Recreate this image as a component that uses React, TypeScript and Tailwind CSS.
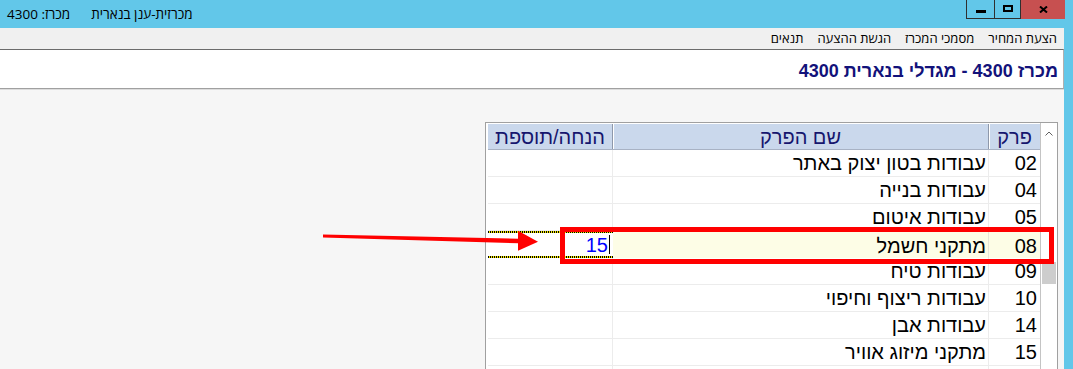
import React from "react";

type Row = { code: string; name: string; edit?: string };

const rows: Row[] = [
  { code: "02", name: "עבודות בטון יצוק באתר" },
  { code: "04", name: "עבודות בנייה" },
  { code: "05", name: "עבודות איטום" },
  { code: "08", name: "מתקני חשמל", edit: "15" },
  { code: "09", name: "עבודות טיח" },
  { code: "10", name: "עבודות ריצוף וחיפוי" },
  { code: "14", name: "עבודות אבן" },
  { code: "15", name: "מתקני מיזוג אוויר" },
  { code: "", name: "" },
];

function NormalRow({ r }: { r: Row }) {
  return (
    <div className="flex shrink-0 h-[27px] border-b border-[#ececec] bg-white">
      <div className="w-[125px] border-r border-[#ececec]" />
      <div
        dir="rtl"
        className="w-[376px] border-r border-[#ececec] flex items-center pr-[2px] text-[20px] text-black whitespace-nowrap"
      >
        {r.name}
      </div>
      <div className="w-[51px] flex items-center justify-end pr-[3px] text-[20px] text-black">
        {r.code}
      </div>
    </div>
  );
}

function EditRow({ r }: { r: Row }) {
  return (
    <div className="flex shrink-0 h-[27px]">
      <div className="w-[125px] flex flex-col bg-white">
        <div className="h-[2px] bg-[repeating-linear-gradient(90deg,#000_0px,#000_1px,#f2e600_1px,#f2e600_2px)]" />
        <div className="flex-1 flex items-center justify-end pr-[3px]">
          <span className="text-[20px] text-[#0000ff] leading-none">{r.edit}</span>
          <span className="w-px h-[19px] bg-black ml-px" />
        </div>
        <div className="h-[2px] bg-[repeating-linear-gradient(90deg,#000_0px,#000_1px,#f2e600_1px,#f2e600_2px)]" />
      </div>
      <div className="flex-1 flex flex-col bg-[#fdfde6]">
        <div className="h-px bg-[repeating-linear-gradient(90deg,#000_0px,#000_1px,#fdfde6_1px,#fdfde6_2px)]" />
        <div className="flex-1 flex">
          <div
            dir="rtl"
            className="w-[376px] border-r border-[#e6e6d8] flex items-center pr-[2px] text-[20px] text-black whitespace-nowrap"
          >
            {r.name}
          </div>
          <div className="flex-1 flex items-center justify-end pr-[3px] text-[20px] text-black">
            {r.code}
          </div>
        </div>
        <div className="h-px bg-[repeating-linear-gradient(90deg,#000_0px,#000_1px,#fdfde6_1px,#fdfde6_2px)]" />
      </div>
    </div>
  );
}

export default function App() {
  return (
    <div className="relative w-[1073px] h-[369px] overflow-hidden bg-[#62c7e9] font-['Liberation_Sans',Arial,sans-serif]">
      {/* Title bar */}
      <div className="flex h-[28px] items-start">
        <div
          dir="rtl"
          className="pl-[7px] pt-[5px] text-[13.5px] leading-[18px] text-black whitespace-nowrap font-['Open_Sans','Liberation_Sans',sans-serif]"
        >
          <span>מכרזית-ענן בנארית</span>
          <span className="mr-[21px]">מכרז: 4300</span>
        </div>
        <div className="ml-auto mr-[8px] flex h-[19px]">
          <div className="w-[28px] h-[19px] border-l border-b border-[#2f2f2f] flex justify-center pt-[10px]">
            <div className="w-[10px] h-[3px] bg-black" />
          </div>
          <div className="w-[26px] h-[19px] border-l border-b border-[#2f2f2f] flex justify-center pt-[5px]">
            <div className="w-[10px] h-[7px] border-2 border-black" />
          </div>
          <div className="w-[45px] h-[19px] border-l border-[#2f2f2f] bg-[#c75050] flex justify-center items-start pt-[6px]">
            <svg width="9" height="7" viewBox="0 0 9 7">
              <path d="M1 0.5 L8 6.5 M8 0.5 L1 6.5" stroke="#000" strokeWidth="2" />
            </svg>
          </div>
        </div>
      </div>

      {/* Body */}
      <div className="flex h-[341px]">
        <div className="w-[1064px] flex flex-col min-h-0">
          {/* Menu bar */}
          <div
            dir="rtl"
            className="shrink-0 h-[21px] bg-[#f0f0f0] flex items-center gap-[14px] pr-[7px] text-[13px] text-black font-['Open_Sans','Liberation_Sans',sans-serif]"
          >
            <span>הצעת המחיר</span>
            <span>מסמכי המכרז</span>
            <span>הגשת ההצעה</span>
            <span>תנאים</span>
          </div>
          {/* Title panel */}
          <div
            dir="rtl"
            className="shrink-0 h-[40px] bg-white border-t border-[#6b6b6b] border-b border-b-[#a0a0a0] border-r border-r-[#b0b0b0] flex items-center pr-[5px] pt-[4px] text-[18px] font-bold text-[#12127a] whitespace-nowrap"
          >
            מכרז 4300 - מגדלי בנארית 4300
          </div>
          <div className="shrink-0 h-px bg-[#dcdcdc]" />
          {/* Gray area */}
          <div className="flex-1 min-h-0 overflow-hidden bg-[#f6f6f6] flex justify-end items-start pt-[32px] pr-[6px]">
            <div className="shrink-0 w-[573px] h-[280px] border border-[#a0a0a0] bg-white flex">
              <div className="flex-1 pl-[2px] pt-px flex flex-col overflow-hidden">
                {/* Header */}
                <div className="flex shrink-0 h-[26px] bg-[#cad8ec] border-b border-[#a8b2c4] text-[20px] text-[#16166e]">
                  <div className="w-[125px] border-r border-[#8e98aa] flex items-center justify-center leading-none">
                    הנחה/תוספת
                  </div>
                  <div className="w-[376px] border-r border-[#8e98aa] shadow-[inset_1px_0_0_#ffffff] flex items-center justify-center leading-none">
                    שם הפרק
                  </div>
                  <div className="flex-1 shadow-[inset_1px_0_0_#ffffff] flex items-center justify-center leading-none">
                    פרק
                  </div>
                </div>
                {rows.map((r, i) =>
                  r.edit ? <EditRow key={i} r={r} /> : <NormalRow key={i} r={r} />
                )}
              </div>
              {/* Scrollbar */}
              <div className="w-[17px] shrink-0 border-l border-[#c4c4c4] bg-white flex flex-col">
                <div className="shrink-0 h-[20px] flex items-center justify-center">
                  <svg width="8" height="5" viewBox="0 0 8 5">
                    <path d="M0.5 4.5 L4 1 L7.5 4.5" stroke="#606060" strokeWidth="1" fill="none" />
                  </svg>
                </div>
                <div className="shrink-0 mt-[119px] h-[22px] mx-px bg-[#cdcdcd]" />
              </div>
            </div>
          </div>
        </div>
        <div className="flex-1 bg-[#62c7e9]" />
      </div>

      {/* Annotation: red box */}
      <div className="absolute left-[560px] top-[227px] w-[494px] h-[37px] border-[5px] border-[#ff0000]" />
      {/* Annotation: arrow */}
      <svg
        className="absolute left-[318px] top-[226px]"
        width="225"
        height="30"
        viewBox="0 0 225 30"
      >
        <polygon points="5,8.5 201,12.8 201,17.2 5,11.5" fill="#ff0000" />
        <polygon points="200,4.7 220,15.7 200,24.7" fill="#ff0000" />
      </svg>
    </div>
  );
}
